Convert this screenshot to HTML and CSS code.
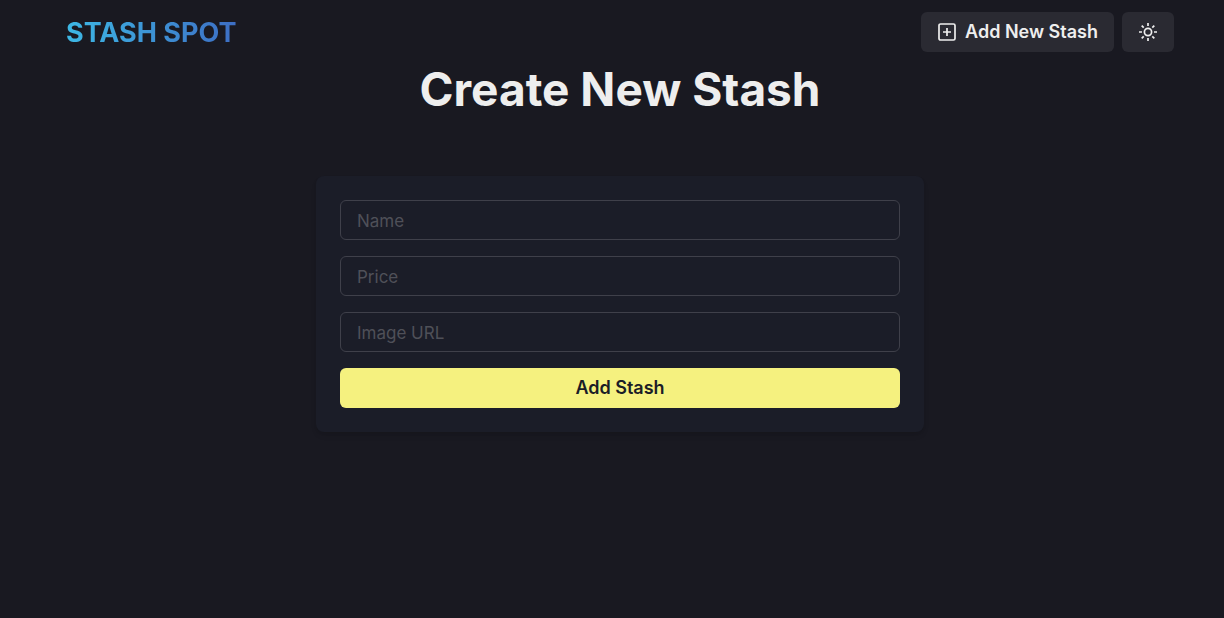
FILE: index.html
```html
<!DOCTYPE html>
<html lang="en">
<head>
  <meta charset="utf-8">
  <meta name="viewport" content="width=device-width, initial-scale=1">
  <title>Stash Spot</title>
  <link rel="stylesheet" href="styles.css">
</head>
<body>
  <header class="navbar">
    <a class="brand" href="#">STASH SPOT</a>
    <nav class="actions">
      <button class="button" type="button">
        <svg class="icon" viewBox="0 0 20 20" fill="none" stroke="currentColor" stroke-width="1.7" aria-hidden="true">
          <rect x="2" y="2" width="16" height="16" rx="1.5"/>
          <path d="M10 6v8M6 10h8"/>
        </svg>
        Add New Stash
      </button>
      <button class="button" type="button" aria-label="Toggle color mode">
        <svg class="icon" viewBox="0 0 20 20" fill="none" stroke="currentColor" stroke-width="1.7" aria-hidden="true">
          <circle cx="10" cy="10" r="3.6"/>
          <path d="M10 1v3M10 16v3M1 10h3M16 10h3M3.7 3.7l2 2M14.3 14.3l2 2M3.7 16.3l2-2M14.3 5.7l2-2"/>
        </svg>
      </button>
    </nav>
  </header>
  <main class="content">
    <h1 class="title">Create New Stash</h1>
    <form class="card">
      <input class="field" type="text" name="name" placeholder="Name" aria-label="Name">
      <input class="field" type="text" name="price" placeholder="Price" aria-label="Price">
      <input class="field" type="text" name="image" placeholder="Image URL" aria-label="Image URL">
      <button class="button button-primary" type="button">Add Stash</button>
    </form>
  </main>
</body>
</html>
```
FILE: styles.css
```css
* {
  box-sizing: border-box;
}

body {
  margin: 0;
  padding-left: 16px;
  min-height: 100vh;
  background: #191921;
  color: #eeeeee;
  font-family: Inter, "Liberation Sans", sans-serif;
  font-size: 18px;
  line-height: 24px;
}

.navbar {
  display: flex;
  align-items: center;
  justify-content: space-between;
  flex-wrap: wrap;
  max-width: 1140px;
  min-height: 64px;
  margin: 0 auto;
  padding: 0 16px;
}

.brand {
  padding-top: 2px;
  background: linear-gradient(to right, #3db8e5, #3d6ec4);
  background-clip: text;
  -webkit-background-clip: text;
  color: transparent;
  font-size: 27px;
  font-weight: 700;
  line-height: 40px;
  text-decoration: none;
}

.actions {
  display: flex;
  gap: 8px;
}

.button {
  display: flex;
  align-items: center;
  justify-content: center;
  gap: 8px;
  height: 40px;
  padding: 0 16px;
  border: 0;
  border-radius: 6px;
  background: #2a2a32;
  color: #eeeeee;
  font: inherit;
  font-weight: 600;
  cursor: pointer;
}

.icon {
  width: 20px;
  height: 20px;
}

.content {
  display: flex;
  flex-direction: column;
  align-items: center;
  gap: 62px;
  max-width: 640px;
  margin: 0 auto;
  padding: 0 16px;
}

.title {
  margin: 0;
  font-size: 46px;
  font-weight: 700;
  line-height: 50px;
  text-align: center;
}

.card {
  display: flex;
  flex-direction: column;
  gap: 16px;
  width: 100%;
  padding: 24px;
  border-radius: 8px;
  background: #1b1d28;
  box-shadow: 0 4px 6px -1px rgba(0, 0, 0, 0.1), 0 2px 4px -1px rgba(0, 0, 0, 0.06);
}

.field {
  width: 100%;
  height: 40px;
  padding: 0 16px;
  border: 1px solid #3f404a;
  border-radius: 6px;
  background: transparent;
  color: #eeeeee;
  font: inherit;
}

.field::placeholder {
  color: #4f5058;
  font-size: 17px;
  opacity: 1;
}

.button-primary {
  background: #f5f17f;
  color: #1b1d27;
}
```
